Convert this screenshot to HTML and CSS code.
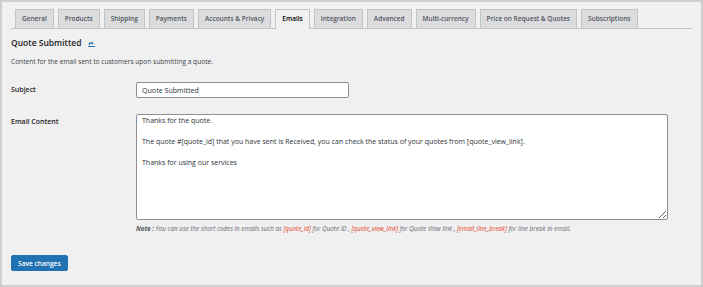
FILE: index.html
```html
<!DOCTYPE html>
<html lang="en">
<head>
<meta charset="UTF-8">
<meta name="viewport" content="width=device-width, initial-scale=1.0">
<title>Emails settings</title>
<link rel="stylesheet" href="styles.css">
</head>
<body>

<div class="frame">
  <nav class="tabs">
    <a class="tab">General</a>
    <a class="tab">Products</a>
    <a class="tab">Shipping</a>
    <a class="tab">Payments</a>
    <a class="tab">Accounts &amp; Privacy</a>
    <a class="tab active">Emails</a>
    <a class="tab">Integration</a>
    <a class="tab">Advanced</a>
    <a class="tab">Multi-currency</a>
    <a class="tab">Price on Request &amp; Quotes</a>
    <a class="tab">Subscriptions</a>
  </nav>

  <div class="content">
    <h2>Quote Submitted
      <a class="backlink" title="Back to emails">
        <svg width="7" height="6" viewBox="0 0 7 6">
          <path d="M1.5 4 V2.2 H4.2" fill="none" stroke="#2271b1" stroke-width="1.2"/>
          <path d="M3.8 0.6 L5.6 2.2 L3.8 3.8 Z" fill="#2271b1"/>
          <rect x="0" y="5" width="7" height="1" fill="#2271b1"/>
        </svg>
      </a>
    </h2>
    <p class="desc">Content for the email sent to customers upon submitting a quote.</p>

    <div class="form-row">
      <label class="field-label">Subject</label>
      <div class="field">
        <input type="text" class="subject" value="Quote Submitted">
      </div>
    </div>

    <div class="form-row">
      <label class="field-label">Email Content</label>
      <div class="field">
        <textarea class="body-text">Thanks for the quote.

The quote #[quote_id] that you have sent is Received, you can check the status of your quotes from [quote_view_link].

Thanks for using our services</textarea>
        <p class="note"><b>Note :</b> You can use the short codes in emails such as <span class="code">[quote_id]</span> for Quote ID , <span class="code">[quote_view_link]</span> for Quote View link , <span class="code">[email_line_break]</span> for line break in email.</p>
      </div>
    </div>

    <button class="save">Save changes</button>
  </div>
</div>

</body>
</html>
```

FILE: styles.css
```css
html, body {
  margin: 0;
  height: 100%;
}
body {
  font-family: "Open Sans", "Noto Sans", sans-serif;
  font-size: 6.6px;
  color: #1d2327;
  background: #f0f0f1;
}
.frame {
  box-sizing: border-box;
  height: 287px;
  width: 703px;
  border: 2px solid #cfcfcf;
  background: #f0f0f0;
  padding: 7px 9px 0 9px;
}
.tabs {
  display: flex;
  gap: 4px;
  padding-left: 4px;
  border-bottom: 1px solid #c3c4c7;
  height: 19px;
}
.tab {
  display: flex;
  align-items: center;
  padding: 0 6px;
  background: #dcdcde;
  border: 1px solid #c3c4c7;
  border-bottom: none;
  color: #50575e;
  font-size: 6.5px;
  font-weight: 600;
  line-height: 1;
}
.tab.active {
  background: #f0f0f0;
  color: #000;
  margin-bottom: -1px;
}
h2 {
  margin: 8px 0 0;
  font-size: 8.5px;
  font-weight: 600;
  line-height: 12px;
  display: flex;
  align-items: center;
  gap: 6px;
}
.backlink {
  display: inline-flex;
  margin-top: 2px;
}
.desc {
  margin: 8px 0 0;
  line-height: 10px;
  color: #3c434a;
}
.form-row {
  display: flex;
  margin-top: 15px;
}
.form-row + .form-row {
  margin-top: 16px;
}
.field-label {
  width: 125px;
  font-size: 7px;
  font-weight: 600;
  padding-top: 3px;
  line-height: 10px;
}
.field {
  display: flex;
  flex-direction: column;
}
.subject {
  box-sizing: border-box;
  width: 213px;
  height: 16px;
  padding: 0 5px;
  border: 1px solid #8c8f94;
  border-radius: 2px;
  font: inherit;
  font-size: 7.1px;
  color: #2c3338;
  background: #fff;
}
.body-text {
  box-sizing: border-box;
  width: 532px;
  height: 106px;
  padding: 1px 5px;
  border: 1px solid #8c8f94;
  border-radius: 2px;
  font: inherit;
  font-size: 7px;
  line-height: 10.5px;
  color: #2c3338;
  background: #fff;
}
.note {
  margin: 4px 0 0;
  font-size: 6.3px;
  font-style: italic;
  color: #646970;
  line-height: 9px;
}
.note b {
  color: #50575e;
}
.code {
  color: #e2401c;
}
.save {
  margin-top: 22px;
  height: 16px;
  padding: 0 6px;
  border: 1px solid #2271b1;
  border-radius: 2px;
  background: #2271b1;
  color: #fff;
  font: inherit;
  font-weight: 600;
  font-size: 6.6px;
}
```
